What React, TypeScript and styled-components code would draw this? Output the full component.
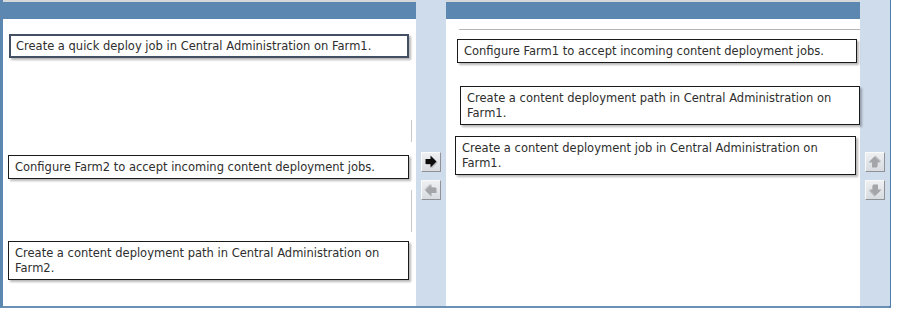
import styled, { createGlobalStyle } from "styled-components";

const GlobalStyle = createGlobalStyle`
  html, body {
    margin: 0;
    padding: 0;
    background: #ffffff;
  }
  body {
    font-family: "DejaVu Sans", Verdana, sans-serif;
  }
`;

type Item = { text: string; top: number; left: number; width?: number; selected?: boolean };

const sourceItems: Item[] = [
  { text: "Create a quick deploy job in Central Administration on Farm1.", top: 15, left: 6, selected: true },
  { text: "Configure Farm2 to accept incoming content deployment jobs.", top: 97, left: 5, width: 401 },
  { text: "Create a content deployment path in Central Administration on Farm2.", top: 62, left: 5, width: 401 },
];

const targetItems: Item[] = [
  { text: "Configure Farm1 to accept incoming content deployment jobs.", top: 9, left: 11 },
  { text: "Create a content deployment path in Central Administration on Farm1.", top: 23, left: 14 },
  { text: "Create a content deployment job in Central Administration on Farm1.", top: 11, left: 9, width: 401 },
];

// block arrow, drawn pointing right and rotated for the other directions
const Arrow = ({ dir, active }: { dir: "right" | "left" | "up" | "down"; active?: boolean }) => {
  const rot = { right: 0, down: 90, left: 180, up: 270 }[dir];
  const fill = active ? "#0d0d0d" : "#a3a5a8";
  const d = "M1.5 4 H6.5 V0.5 L12.5 6.5 L6.5 12.5 V9 H1.5 Z";
  return (
    <svg width="14" height="14" viewBox="0 0 14 14">
      <g transform={`rotate(${rot} 7 7)`}>
        <path d={d} fill="#6c6c6c" opacity="0.35" transform="translate(1 1)" />
        <path d={d} fill={fill} />
      </g>
    </svg>
  );
};

export default function App() {
  return (
    <>
      <GlobalStyle />
      <Frame>
        <Panel $width={413}>
          <Header />
          <Body>
            <Guide $top={101} $height={22} />
            <Guide $top={171} $height={42} />
            {sourceItems.map((it) => (
              <Card key={it.text} $top={it.top} $left={it.left} $width={it.width ?? 400} $selected={it.selected}>
                {it.text}
              </Card>
            ))}
          </Body>
        </Panel>
        <Gutter>
          <ArrowButton aria-label="Move right">
            <Arrow dir="right" active />
          </ArrowButton>
          <ArrowButton aria-label="Move left">
            <Arrow dir="left" />
          </ArrowButton>
        </Gutter>
        <Panel $width={412}>
          <Header />
          <Body>
            <Divider />
            {targetItems.map((it) => (
              <Card key={it.text} $top={it.top} $left={it.left} $width={it.width ?? 400}>
                {it.text}
              </Card>
            ))}
          </Body>
        </Panel>
        <Gutter>
          <ArrowButton aria-label="Move up">
            <Arrow dir="up" />
          </ArrowButton>
          <ArrowButton aria-label="Move down">
            <Arrow dir="down" />
          </ArrowButton>
        </Gutter>
      </Frame>
    </>
  );
}

const Frame = styled.div`
  display: flex;
  width: 885px;
  height: 306px;
  border-left: 3px solid #5b87b0;
  border-right: 3px solid #4e7eae;
  border-bottom: 2px solid #6a90b5;
`;

const Panel = styled.section<{ $width: number }>`
  flex: 0 0 ${(p) => p.$width}px;
  display: flex;
  flex-direction: column;
  border-top: 2px solid #d6d8da;
`;

const Header = styled.div`
  height: 17px;
  background: #5b87b0;
`;

const Body = styled.div`
  position: relative;
  flex: 1;
  display: flex;
  flex-direction: column;
  align-items: flex-start;
  background: #ffffff;
`;

const Guide = styled.div<{ $top: number; $height: number }>`
  position: absolute;
  right: 4px;
  top: ${(p) => p.$top}px;
  height: ${(p) => p.$height}px;
  border-left: 1px solid #c8c8c8;
`;

const Divider = styled.div`
  align-self: stretch;
  margin: 10px 0 0 13px;
  border-top: 1px solid #b4b4b4;
`;

const Card = styled.div<{ $top: number; $left: number; $width: number; $selected?: boolean }>`
  box-sizing: border-box;
  width: ${(p) => p.$width}px;
  margin: ${(p) => p.$top}px 0 0 ${(p) => p.$left}px;
  padding: ${(p) => (p.$selected ? "3px 5px 2px" : "4px 6px 3px")};
  border: ${(p) => (p.$selected ? "2px solid #434f62" : "1px solid #1a1a1a")};
  background: #ffffff;
  box-shadow: 2px 2px 2px rgba(0, 0, 0, 0.28);
  color: #2e2e2e;
  font-size: 11.5px;
  line-height: 15px;
`;

const Gutter = styled.div`
  flex: 0 0 30px;
  display: flex;
  flex-direction: column;
  align-items: center;
  gap: 8px;
  padding-top: 152px;
  background: #cfdcec;
`;

const ArrowButton = styled.button`
  display: flex;
  align-items: center;
  justify-content: center;
  width: 20px;
  height: 20px;
  padding: 0;
  background: linear-gradient(#eef0f2, #d8dbe0);
  border: 1px solid;
  border-color: #fafafa #8e9296 #8e9296 #fafafa;
  cursor: pointer;
`;
